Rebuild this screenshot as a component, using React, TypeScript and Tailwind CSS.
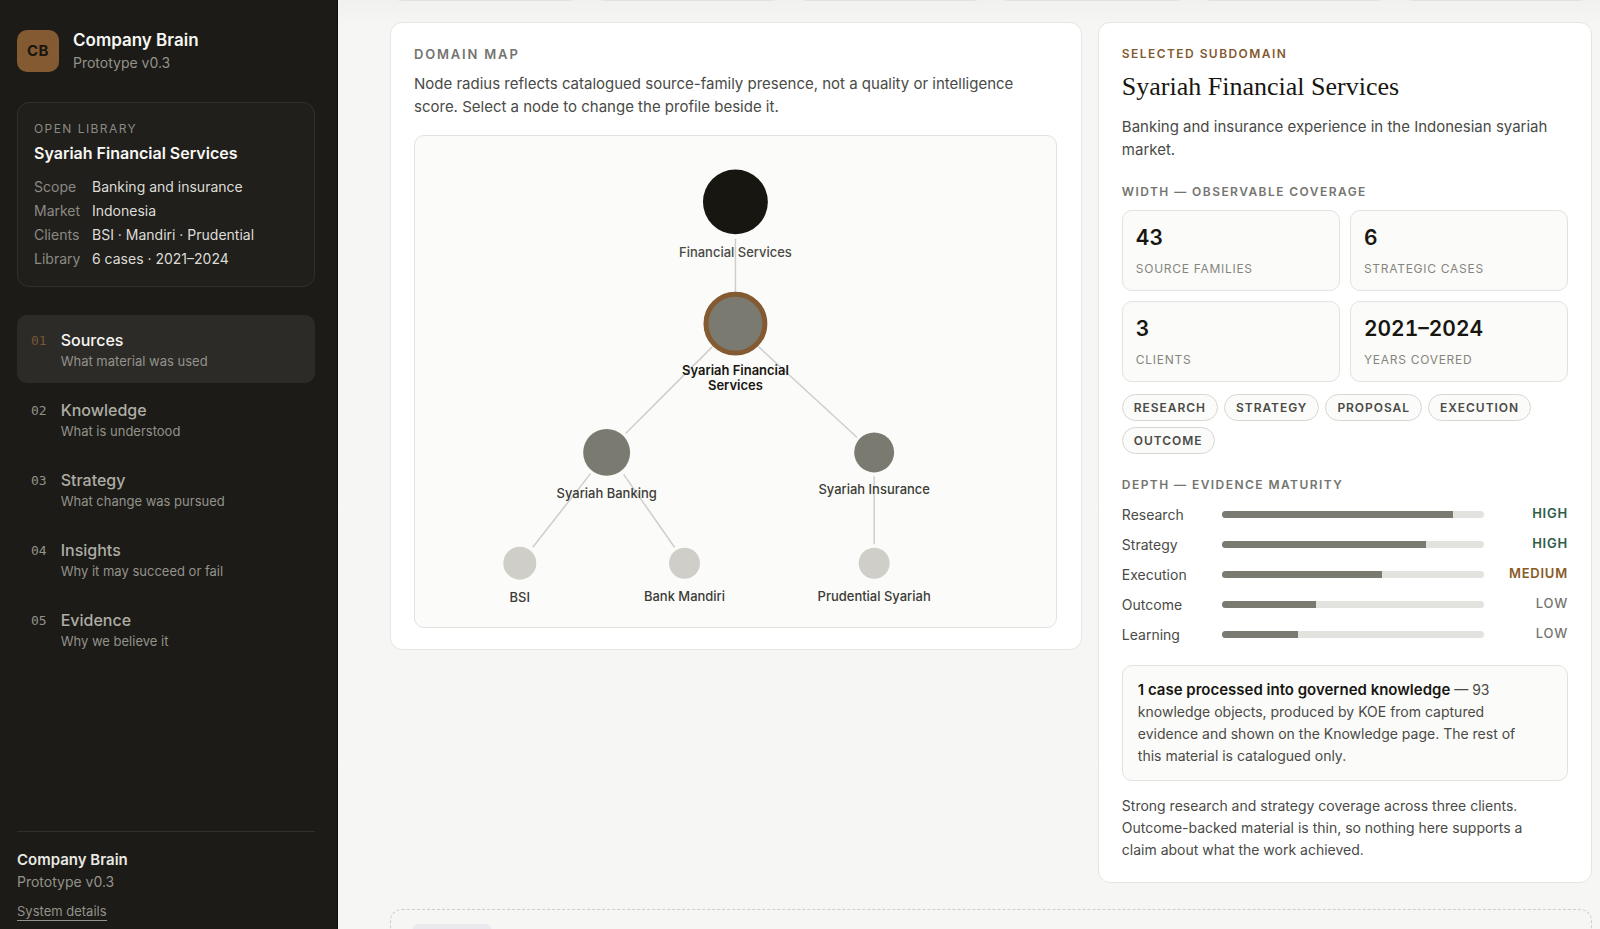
import React, { useState } from "react";

const facts = [
  ["Scope", "Banking and insurance"],
  ["Market", "Indonesia"],
  ["Clients", "BSI · Mandiri · Prudential"],
  ["Library", "6 cases · 2021–2024"],
];

const sections = [
  ["01", "Sources", "What material was used"],
  ["02", "Knowledge", "What is understood"],
  ["03", "Strategy", "What change was pursued"],
  ["04", "Insights", "Why it may succeed or fail"],
  ["05", "Evidence", "Why we believe it"],
];

const stats = [
  ["43", "Source families"],
  ["6", "Strategic cases"],
  ["3", "Clients"],
  ["2021–2024", "Years covered"],
];

const stages = ["Research", "Strategy", "Proposal", "Execution", "Outcome"];

const depth = [
  { name: "Research", value: 88, level: "High", tone: "text-[#2f5d4a] font-semibold" },
  { name: "Strategy", value: 78, level: "High", tone: "text-[#2f5d4a] font-semibold" },
  { name: "Execution", value: 61, level: "Medium", tone: "text-[#8a5a1f] font-semibold" },
  { name: "Outcome", value: 36, level: "Low", tone: "text-[#74746f] font-medium" },
  { name: "Learning", value: 29, level: "Low", tone: "text-[#74746f] font-medium" },
];

const edges = [
  [321, 103, 321, 157],
  [298, 211, 211, 298],
  [344, 211, 443, 302],
  [176, 338, 118, 412],
  [209, 339, 260, 412],
  [460, 341, 460, 409],
];

const nodes = [
  { id: "fs", x: 321, y: 66, r: 32.5, fill: "#171611", ink: "#4a4a46", labelY: 121, lines: ["Financial Services"] },
  { id: "sfs", x: 321, y: 188, r: 29.5, fill: "#7a7a71", ink: "#171611", labelY: 239, lines: ["Syariah Financial", "Services"] },
  { id: "sb", x: 192, y: 317, r: 23.5, fill: "#7a7a71", ink: "#3c3c38", labelY: 363, lines: ["Syariah Banking"] },
  { id: "si", x: 460, y: 317, r: 20, fill: "#7a7a71", ink: "#3c3c38", labelY: 359, lines: ["Syariah Insurance"] },
  { id: "bsi", x: 105, y: 428, r: 16.5, fill: "#cfcec9", ink: "#3c3c38", labelY: 467, lines: ["BSI"] },
  { id: "bm", x: 270, y: 428, r: 15.5, fill: "#cfcec9", ink: "#3c3c38", labelY: 466, lines: ["Bank Mandiri"] },
  { id: "ps", x: 460, y: 428, r: 15.5, fill: "#cfcec9", ink: "#3c3c38", labelY: 466, lines: ["Prudential Syariah"] },
];

function Sidebar() {
  return (
    <aside className="flex w-[338px] shrink-0 flex-col border-r border-[#0d0d0b] bg-[#1c1b17] pt-7 pr-[22px] pb-[7px] pl-[17px]">
      <div className="flex items-center gap-[14px]">
        <div className="flex size-[42px] items-center justify-center rounded-[10px] bg-[#845a32] text-[15px] font-bold tracking-[0.04em] text-[#171611]">
          CB
        </div>
        <div>
          <div className="text-[17px] leading-6 font-semibold text-[#f7f7f4]">Company Brain</div>
          <div className="text-[14px] leading-[22px] text-[#93928b]">Prototype v0.3</div>
        </div>
      </div>

      <section className="mt-7 rounded-xl border border-[#31302c] bg-[#201f1c] px-4 pt-4 pb-4">
        <div className="text-[12px] leading-5 tracking-[0.12em] text-[#8b8a83] uppercase">Open library</div>
        <h2 className="mt-[2px] text-[16px] leading-6 font-semibold text-[#f7f7f4]">Syariah Financial Services</h2>
        <dl className="mt-[9px]">
          {facts.map(([term, detail]) => (
            <div key={term} className="flex h-6 items-center text-[14px]">
              <dt className="w-[58px] text-[#8b8a83]">{term}</dt>
              <dd className="text-[#dddcd6]">{detail}</dd>
            </div>
          ))}
        </dl>
      </section>

      <nav className="mt-7 flex flex-col gap-[2px]">
        {sections.map(([num, name, hint], i) => (
          <a
            key={num}
            href={"#" + name.toLowerCase()}
            className={
              "flex gap-[14px] rounded-[10px] px-[14px] pt-[14px] pb-3 " + (i === 0 ? "bg-[#2c2b28]" : "")
            }
          >
            <span
              className={
                "font-['DejaVu_Sans_Mono',monospace] text-[13px] leading-6 " +
                (i === 0 ? "text-[#7a5634]" : "text-[#93928b]")
              }
            >
              {num}
            </span>
            <span>
              <span
                className={
                  "block text-[16px] leading-[22px] font-medium " + (i === 0 ? "text-[#f7f7f4]" : "text-[#aeada5]")
                }
              >
                {name}
              </span>
              <span className="block text-[13px] leading-5 text-[#93928b]">{hint}</span>
            </span>
          </a>
        ))}
      </nav>

      <footer className="mt-auto border-t border-[#31302c] pt-4">
        <div className="text-[15px] leading-6 font-semibold text-[#e9e8e2]">Company Brain</div>
        <div className="text-[14px] leading-5 text-[#93928b]">Prototype v0.3</div>
        <button type="button" className="mt-[10px] border-b border-[#93928b] text-[13px] leading-[18px] text-[#93928b]">
          System details
        </button>
      </footer>
    </aside>
  );
}

function DomainMap() {
  const [selected, setSelected] = useState("sfs");
  return (
    <section className="rounded-xl border border-[#e5e5e2] bg-white pt-5 pr-6 pb-[21px] pl-[23px]">
      <h2 className="text-[13px] leading-[22px] font-semibold tracking-[0.14em] text-[#74746f] uppercase">
        Domain map
      </h2>
      <p className="mt-[7px] text-[15px] leading-[23px] text-[#4a4a46]">
        Node radius reflects catalogued source-family presence, not a quality or intelligence score. Select a node to
        change the profile beside it.
      </p>
      <div className="mt-[17px] rounded-[10px] border border-[#e2e2df] bg-[#fbfbf9]">
        <svg viewBox="0 0 642 492" className="block w-full" role="group" aria-label="Domain map">
          {edges.map(([x1, y1, x2, y2]) => (
            <line key={x1 + "-" + x2 + "-" + y1} x1={x1} y1={y1} x2={x2} y2={y2} stroke="#cfcecb" strokeWidth={1.5} />
          ))}
          {nodes.map((n) => (
            <g key={n.id} className="cursor-pointer" onClick={() => setSelected(n.id)}>
              <circle
                cx={n.x}
                cy={n.y}
                r={n.r}
                fill={n.fill}
                stroke={selected === n.id ? "#845a32" : "none"}
                strokeWidth={5}
              />
              <text
                textAnchor="middle"
                fill={n.ink}
                className={"text-[13px] " + (selected === n.id ? "font-semibold" : "font-medium")}
              >
                {n.lines.map((line, i) => (
                  <tspan key={line} x={n.x} y={n.labelY + i * 15}>
                    {line}
                  </tspan>
                ))}
              </text>
            </g>
          ))}
        </svg>
      </div>
    </section>
  );
}

const kicker = "text-[12px] leading-5 font-semibold tracking-[0.12em] uppercase";

function Profile() {
  return (
    <section className="rounded-xl border border-[#e5e5e2] bg-white px-[23px] pt-[21px] pb-[21px]">
      <div className={kicker + " text-[#845a32]"}>Selected subdomain</div>
      <h1 className="mt-[7px] font-['Liberation_Serif',serif] text-[26px] leading-8 text-[#171611]">
        Syariah Financial Services
      </h1>
      <p className="mt-3 text-[15px] leading-[23px] text-[#4a4a46]">
        Banking and insurance experience in the Indonesian syariah market.
      </p>

      <h3 className={kicker + " mt-[21px] text-[#74746f]"}>Width — observable coverage</h3>
      <dl className="mt-2 grid grid-cols-2 gap-[10px]">
        {stats.map(([value, label]) => (
          <div
            key={label}
            className="flex flex-col-reverse rounded-[10px] border border-[#e2e2df] bg-[#fbfbf9] px-[13px] pt-3 pb-[11px]"
          >
            <dt className="mt-[6px] text-[12px] leading-5 tracking-[0.06em] text-[#85857f] uppercase">{label}</dt>
            <dd className="text-[21px] leading-[30px] font-semibold text-[#171611] tabular-nums">{value}</dd>
          </div>
        ))}
      </dl>

      <ul className="mt-3 flex flex-wrap gap-[6px]">
        {stages.map((stage) => (
          <li
            key={stage}
            className="rounded-full border border-[#d6d6d2] bg-[#fbfbf9] px-[11px] text-[12px] leading-[25px] font-semibold tracking-[0.08em] text-[#4a4a46] uppercase"
          >
            {stage}
          </li>
        ))}
      </ul>

      <h3 className={kicker + " mt-[21px] text-[#74746f]"}>Depth — evidence maturity</h3>
      <ul className="mt-1">
        {depth.map((d) => (
          <li key={d.name} className="flex h-[30px] items-center">
            <span className="w-[100px] text-[14px] text-[#4a4a46]">{d.name}</span>
            <span className="h-[7px] flex-1 overflow-hidden rounded-full bg-[#e2e2df]">
              <span className="block h-full bg-[#7a7a71]" style={{ width: d.value + "%" }} />
            </span>
            <span className={"w-[84px] text-right text-[13px] tracking-[0.06em] uppercase " + d.tone}>{d.level}</span>
          </li>
        ))}
      </ul>

      <p className="mt-4 rounded-[10px] border border-[#e2e2df] bg-[#fbfbf9] py-[13px] pr-7 pl-[15px] text-[14px] leading-[22px] text-[#4a4a46]">
        <strong className="text-[15px] font-semibold text-[#171611]">1 case processed into governed knowledge</strong>{" "}
        — 93 knowledge objects, produced by KOE from captured evidence and shown on the Knowledge page. The rest of
        this material is catalogued only.
      </p>
      <p className="mt-[14px] pr-5 text-[14px] leading-[22px] text-[#4a4a46]">
        Strong research and strategy coverage across three clients. Outcome-backed material is thin, so nothing here
        supports a claim about what the work achieved.
      </p>
    </section>
  );
}

export default function App() {
  return (
    <div className="flex h-screen overflow-hidden bg-[#f6f6f4] font-['Inter','Liberation_Sans',sans-serif]">
      <Sidebar />
      <main className="min-w-0 flex-1 overflow-hidden bg-linear-to-b from-[#f1f1ef] to-[#f6f6f4] to-[28px] pr-2 pl-[52px]">
        <div className="-mt-[95px] grid grid-cols-6 gap-[10px]">
          {stats.concat(stats.slice(0, 2)).map((_, i) => (
            <div key={i} className="h-24 rounded-xl border border-[#e2e2df] bg-white" />
          ))}
        </div>
        <div className="mt-[21px] grid grid-cols-[1.4fr_1fr] items-start gap-4">
          <DomainMap />
          <Profile />
        </div>
        <section className="mt-[26px] h-40 rounded-xl border border-dashed border-[#cfcecb] px-[21px] pt-[14px]">
          <div className="h-7 w-20 rounded-lg bg-[#e9e9ee]" />
        </section>
      </main>
    </div>
  );
}
